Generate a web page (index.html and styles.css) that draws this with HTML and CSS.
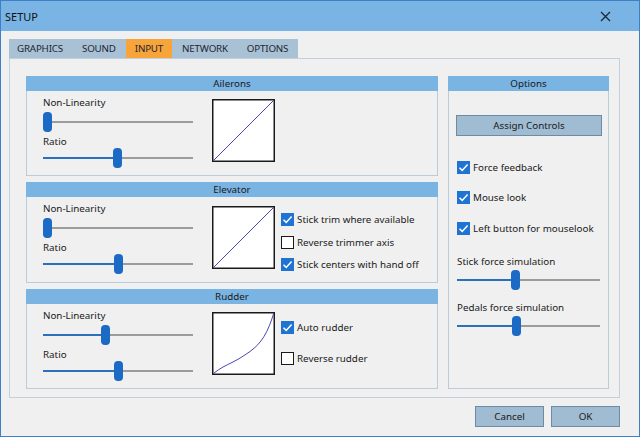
FILE: index.html
```html
<!DOCTYPE html>
<html>
<head>
<meta charset="utf-8">
<link rel="stylesheet" href="styles.css">
</head>
<body>
<div class="window">
  <div class="titlebar">
    <span class="title">SETUP</span>
    <svg class="close" width="11" height="11" viewBox="0 0 11 11"><path d="M1 1L10 10M10 1L1 10" stroke="#1b2733" stroke-width="1.3" fill="none"/></svg>
  </div>
  <div class="body">
    <div class="tabs">
      <span class="tab">GRAPHICS</span>
      <span class="tab">SOUND</span>
      <span class="tab active">INPUT</span>
      <span class="tab">NETWORK</span>
      <span class="tab">OPTIONS</span>
    </div>
    <div class="panel">
      <div class="col-left">
        <section class="group g-ail">
          <div class="ghead">Ailerons</div>
          <div class="gbody">
            <div class="sliders">
              <div class="lbl">Non-Linearity</div>
              <div class="slider"><div class="fill" style="width:0px"></div><div class="thumb" style="left:0px"></div></div>
              <div class="lbl lbl2">Ratio</div>
              <div class="slider s2"><div class="fill" style="width:70px"></div><div class="thumb" style="left:70px"></div></div>
            </div>
            <svg class="graph" width="63" height="63" viewBox="0 0 63 63"><rect x="0.75" y="0.75" width="61.5" height="61.5" fill="#fff" stroke="#1a1a1a" stroke-width="1.5"/><path d="M1.5 61.5L61.5 1.5" stroke="#4646b4" stroke-width="1" fill="none"/></svg>
          </div>
        </section>
        <section class="group g-elev">
          <div class="ghead">Elevator</div>
          <div class="gbody">
            <div class="sliders">
              <div class="lbl">Non-Linearity</div>
              <div class="slider"><div class="fill" style="width:0px"></div><div class="thumb" style="left:0px"></div></div>
              <div class="lbl lbl2">Ratio</div>
              <div class="slider s2"><div class="fill" style="width:71px"></div><div class="thumb" style="left:71px"></div></div>
            </div>
            <svg class="graph" width="63" height="63" viewBox="0 0 63 63"><rect x="0.75" y="0.75" width="61.5" height="61.5" fill="#fff" stroke="#1a1a1a" stroke-width="1.5"/><path d="M1.5 61.5L61.5 1.5" stroke="#4646b4" stroke-width="1" fill="none"/></svg>
            <div class="checks elev-checks">
              <label class="chk"><span class="box on"><svg width="13" height="13" viewBox="0 0 13 13"><path d="M2.5 6.8L5.2 9.4L10.6 3.6" stroke="#fff" stroke-width="1.5" fill="none"/></svg></span>Stick trim where available</label>
              <label class="chk"><span class="box"></span>Reverse trimmer axis</label>
              <label class="chk"><span class="box on"><svg width="13" height="13" viewBox="0 0 13 13"><path d="M2.5 6.8L5.2 9.4L10.6 3.6" stroke="#fff" stroke-width="1.5" fill="none"/></svg></span>Stick centers with hand off</label>
            </div>
          </div>
        </section>
        <section class="group g-rud">
          <div class="ghead">Rudder</div>
          <div class="gbody">
            <div class="sliders">
              <div class="lbl">Non-Linearity</div>
              <div class="slider"><div class="fill" style="width:58px"></div><div class="thumb" style="left:58px"></div></div>
              <div class="lbl lbl2">Ratio</div>
              <div class="slider s2"><div class="fill" style="width:71px"></div><div class="thumb" style="left:71px"></div></div>
            </div>
            <svg class="graph" width="63" height="63" viewBox="0 0 63 63"><rect x="0.75" y="0.75" width="61.5" height="61.5" fill="#fff" stroke="#1a1a1a" stroke-width="1.5"/><path d="M1.5 61.5C8 56 14 53.5 20 50.5C27 47 33 43 38 39.5C44 35 48 31 52 24.5C56 18 59 10 61.5 2" stroke="#4646b4" stroke-width="1" fill="none"/></svg>
            <div class="checks rud-checks">
              <label class="chk"><span class="box on"><svg width="13" height="13" viewBox="0 0 13 13"><path d="M2.5 6.8L5.2 9.4L10.6 3.6" stroke="#fff" stroke-width="1.5" fill="none"/></svg></span>Auto rudder</label>
              <label class="chk"><span class="box"></span>Reverse rudder</label>
            </div>
          </div>
        </section>
      </div>
      <section class="group options">
        <div class="ghead">Options</div>
        <div class="obody">
          <div class="btn assign">Assign Controls</div>
          <div class="checks opt-checks">
            <label class="chk"><span class="box on"><svg width="13" height="13" viewBox="0 0 13 13"><path d="M2.5 6.8L5.2 9.4L10.6 3.6" stroke="#fff" stroke-width="1.5" fill="none"/></svg></span>Force feedback</label>
            <label class="chk"><span class="box on"><svg width="13" height="13" viewBox="0 0 13 13"><path d="M2.5 6.8L5.2 9.4L10.6 3.6" stroke="#fff" stroke-width="1.5" fill="none"/></svg></span>Mouse look</label>
            <label class="chk"><span class="box on"><svg width="13" height="13" viewBox="0 0 13 13"><path d="M2.5 6.8L5.2 9.4L10.6 3.6" stroke="#fff" stroke-width="1.5" fill="none"/></svg></span>Left button for mouselook</label>
          </div>
          <div class="lbl olbl1">Stick force simulation</div>
          <div class="slider oslider"><div class="fill" style="width:54px"></div><div class="thumb" style="left:54px"></div></div>
          <div class="lbl olbl2">Pedals force simulation</div>
          <div class="slider oslider"><div class="fill" style="width:55px"></div><div class="thumb" style="left:55px"></div></div>
        </div>
      </section>
    </div>
    <div class="footer">
      <div class="btn fbtn">Cancel</div>
      <div class="btn fbtn">OK</div>
    </div>
  </div>
</div>
</body>
</html>
```

FILE: styles.css
```css
* { box-sizing: border-box; }
html, body { margin: 0; padding: 0; }
body {
  width: 640px;
  height: 437px;
  overflow: hidden;
  font-family: "Noto Sans", "Open Sans", sans-serif;
  font-size: 9.8px;
  color: #1a1a1a;
  background: #f0f0f0;
}
.window {
  width: 640px;
  height: 437px;
  border: 1px solid #3d80c6;
  display: flex;
  flex-direction: column;
  background: #f0f0f0;
}
.titlebar {
  height: 30px;
  flex: none;
  background: #79b4e5;
  display: flex;
  align-items: center;
  justify-content: space-between;
  padding: 0 28px 0 4px;
}
.title { font-size: 11px; color: #111; }
.close { display: block; }
.body {
  flex: 1;
  padding: 8px 0 0 8px;
  display: flex;
  flex-direction: column;
}
.tabs {
  align-self: flex-start;
  height: 19px;
  background: #a9c1d5;
  display: flex;
  align-items: stretch;
  padding-left: 1px;
}
.tab {
  display: flex;
  align-items: center;
  padding: 0 9px;
  margin-right: 1px;
  font-size: 9.8px;
  letter-spacing: -0.2px;
  color: #1e2630;
}
.tab:first-child { padding-left: 7px; }
.tab.active { background: #f7a43a; }
.tab:last-child { padding-right: 10px; margin-right: 0; }
.panel {
  width: 611px;
  height: 340px;
  border: 1px solid #c3d0dc;
  padding: 17px 10px 0 16px;
  display: flex;
  gap: 10px;
}
.col-left {
  width: 412px;
  display: flex;
  flex-direction: column;
  gap: 6px;
}
.group {
  border: 1px solid #bccbd8;
  background: #f0f0f0;
}
.g-ail { height: 100px; }
.g-elev { height: 101px; }
.g-rud { height: 100px; }
.options { width: 161px; height: 313px; }
.ghead {
  height: 15px;
  margin: -1px -1px 0;
  background: #7ab4e3;
  text-align: center;
  line-height: 15px;
  color: #1a1a1a;
}
.gbody {
  display: flex;
  align-items: flex-start;
  padding-left: 16px;
}
.sliders {
  width: 150px;
  padding-top: 5px;
  display: flex;
  flex-direction: column;
}
.lbl { height: 14px; line-height: 14px; }
.slider {
  position: relative;
  width: 150px;
  height: 20px;
  margin-top: 2px;
}
.slider::before {
  content: "";
  position: absolute;
  left: 0; right: 0; top: 9px;
  height: 2px;
  background: #9c9c9c;
}
.fill {
  position: absolute;
  left: 0; top: 9px;
  height: 2px;
  background: #2b6fbd;
}
.thumb {
  position: absolute;
  top: 0;
  width: 9px;
  height: 20px;
  border-radius: 4px;
  background: #1a6ac6;
}
.lbl2 { margin-top: 3px; }
.s2 { margin-top: -1px; }
.graph {
  display: block;
  margin: 8px 0 0 19px;
  flex: none;
}
.g-elev .graph { margin-top: 9px; }
.checks { display: flex; flex-direction: column; }
.chk {
  display: flex;
  align-items: center;
  height: 14px;
  gap: 3px;
  white-space: nowrap;
}
.box {
  width: 13px;
  height: 13px;
  flex: none;
  border: 1.5px solid #1a1a1a;
  background: #fff;
  display: block;
}
.box.on {
  border: none;
  background: #1f74d3;
}
.box svg { display: block; }
.elev-checks { margin: 15px 0 0 6px; gap: 9px; }
.elev-checks .chk:nth-child(3) { margin-top: -1px; }
.rud-checks { margin: 16px 0 0 6px; gap: 17px; }
.obody {
  padding: 24px 0 0 8px;
  display: flex;
  flex-direction: column;
}
.btn {
  background: #a0bcd3;
  border: 1px solid #6e8ba3;
  display: flex;
  align-items: center;
  justify-content: center;
  color: #1a1a1a;
}
.assign {
  width: 146px;
  height: 21px;
  margin-left: -1px;
}
.opt-checks { margin-top: 24px; gap: 16px; }
.opt-checks .chk:nth-child(3) { margin-top: 1px; }
.olbl1 { margin-top: 20px; }
.oslider { width: 143px; margin-top: 1px; }
.olbl2 { margin-top: 11px; }
.footer {
  display: flex;
  gap: 7px;
  padding-left: 466px;
  margin-top: 8px;
}
.fbtn { width: 69px; height: 21px; }
```
